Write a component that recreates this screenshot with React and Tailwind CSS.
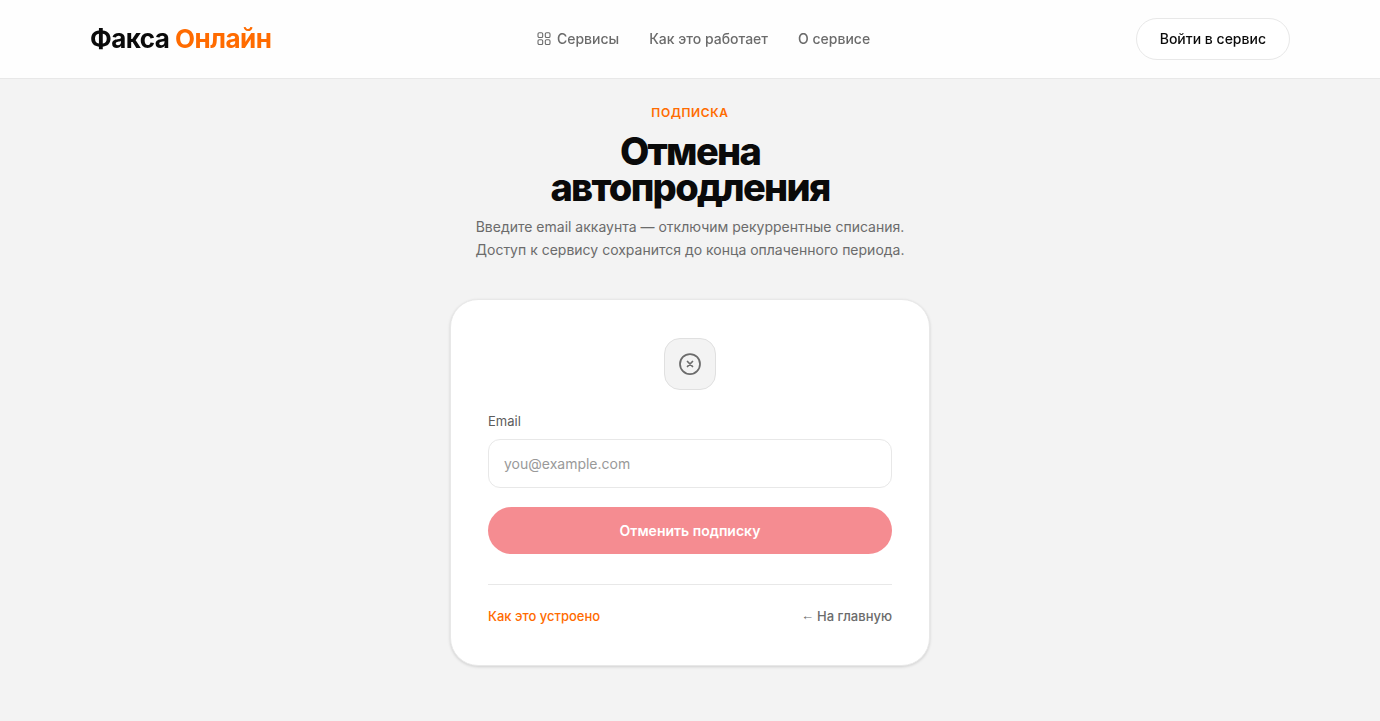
import { useState } from "react";

const NAV_LINKS = [
  { href: "#how", label: "Как это работает" },
  { href: "#about", label: "О сервисе" },
];

function GridIcon() {
  return (
    <svg width="14" height="14" viewBox="0 0 14 14" fill="none" stroke="currentColor" strokeWidth="1.1" aria-hidden="true">
      <rect x="1" y="0.8" width="4.7" height="4.7" rx="1.3" />
      <rect x="8.3" y="0.8" width="4.7" height="4.7" rx="1.3" />
      <rect x="1" y="7.8" width="4.7" height="4.7" rx="1.3" />
      <rect x="8.3" y="7.8" width="4.7" height="4.7" rx="1.3" />
    </svg>
  );
}

function CancelIcon() {
  return (
    <svg width="24" height="24" viewBox="0 0 24 24" fill="none" stroke="currentColor" strokeWidth="1.75" strokeLinecap="round" aria-hidden="true">
      <circle cx="12" cy="12" r="10" />
      <path d="M9.5 9.5l5 5M14.5 9.5l-5 5" />
    </svg>
  );
}

function Header() {
  return (
    <header className="border-b border-[#e8e8e8] bg-[#fefefe] will-change-transform">
      <div className="mx-auto flex h-[78px] max-w-[1200px] items-center justify-between">
        <a href="/" className="text-[26px] leading-8 font-bold tracking-[-0.02em] text-[#0a0a0a]">
          Факса <span className="text-[#ff6b00]">Онлайн</span>
        </a>
        <nav className="flex items-center gap-[30px] text-sm font-medium text-[#6b6b6b]">
          <button type="button" className="flex items-center gap-[6px]">
            <GridIcon />
            Сервисы
          </button>
          {NAV_LINKS.map((link) => (
            <a key={link.href} href={link.href}>{link.label}</a>
          ))}
        </nav>
        <a href="/login" className="rounded-full border border-[#e8e8e8] bg-white px-[23px] py-[10px] text-sm font-medium text-[#0a0a0a]">
          Войти в сервис
        </a>
      </div>
    </header>
  );
}

function CancelForm() {
  const [email, setEmail] = useState("");

  return (
    <form
      onSubmit={(e) => e.preventDefault()}
      className="mt-[38px] w-full max-w-[480px] rounded-[28px] border border-[#e8e8e8] bg-white px-[37px] pt-[38px] pb-[39px] shadow-[0_1px_3px_rgba(0,0,0,0.15)]"
    >
      <div className="mx-auto flex size-[52px] items-center justify-center rounded-2xl border border-[#e0e0e0] bg-[#f3f3f3] text-[#6b6b6b]">
        <CancelIcon />
      </div>
      <label htmlFor="email" className="mt-[21px] block text-[13px] leading-5 text-[#5c5c5c]">
        Email
      </label>
      <input
        id="email"
        type="email"
        value={email}
        onChange={(e) => setEmail(e.target.value)}
        placeholder="you@example.com"
        className="mt-2 block h-[49px] w-full rounded-xl border border-[#e8e8e8] bg-white px-[15px] text-sm text-[#0a0a0a] placeholder:text-[#999999] focus:border-[#ff6b00] focus:outline-none"
      />
      <button
        type="submit"
        className="mt-[19px] block h-[47px] w-full rounded-full bg-[#f58c91] text-sm font-semibold text-white"
      >
        Отменить подписку
      </button>
      <div className="mt-[30px] flex items-center justify-between border-t border-[#e8e8e8] pt-[21px] text-[13px] leading-5 font-medium">
        <a href="#how" className="text-[#ff6b00]">Как это устроено</a>
        <a href="/" className="flex items-center gap-[3px] text-[#6b6b6b]">
          <span className="font-['Liberation_Sans',sans-serif] leading-4 font-normal">←</span>
          На главную
        </a>
      </div>
    </form>
  );
}

export default function App() {
  return (
    <div className="min-h-screen bg-[#f3f3f3] font-['Inter',sans-serif]">
      <Header />
      <main className="flex flex-col items-center px-4 pt-6 pb-12">
        <p className="text-xs leading-5 font-semibold tracking-wider text-[#ff6b00] uppercase">Подписка</p>
        <h1 className="mt-[10px] text-center text-[38px] leading-9 font-extrabold tracking-[-0.045em] text-[#0a0a0a]">
          Отмена
          <br />
          автопродления
        </h1>
        <p className="mt-[10px] max-w-[440px] text-center text-sm leading-[23px] text-[#6b6b6b]">
          Введите email аккаунта — отключим рекуррентные списания. Доступ к сервису сохранится до конца оплаченного периода.
        </p>
        <CancelForm />
      </main>
    </div>
  );
}
